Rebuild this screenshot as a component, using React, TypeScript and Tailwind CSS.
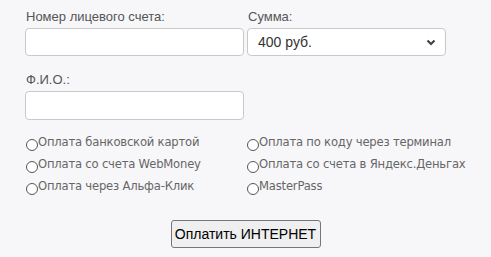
import React from "react"

const methods = [
    "Оплата банковской картой",
    "Оплата по коду через терминал",
    "Оплата со счета WebMoney",
    "Оплата со счета в Яндекс.Деньгах",
    "Оплата через Альфа-Клик",
    "MasterPass",
]

export default function App() {
    return (
        <div className="min-h-screen w-full bg-[#f7f7f9] pt-[9px] font-['Liberation_Sans',Arial,sans-serif]">
            <div className="pl-[25px]">
                <div className="grid grid-cols-[219px_199px] gap-x-[3px]">
                    <div className="flex flex-col">
                        <label className="pl-[1px] text-[13px] leading-[16px] text-[#555]">Номер лицевого счета:</label>
                        <input className="mt-[3px] h-[28px] rounded-[4px] border border-[#c9c9c9] bg-white" />
                    </div>
                    <div className="flex flex-col">
                        <label className="pl-[1px] text-[13px] leading-[16px] text-[#555]">Сумма:</label>
                        <div className="mt-[3px] flex h-[28px] items-center justify-between rounded-[4px] border border-[#c9c9c9] bg-white pl-[10px] pr-[9px]">
                            <span className="text-[14px] text-[#333]">400 руб.</span>
                            <svg width="10" height="7" viewBox="0 0 10 7">
                                <path d="M1.5 1.5 L5 5 L8.5 1.5" fill="none" stroke="#444" strokeWidth="2.2" />
                            </svg>
                        </div>
                    </div>
                </div>

                <div className="mt-[16px] flex w-[219px] flex-col">
                    <label className="pl-[1px] text-[13px] leading-[16px] text-[#555]">Ф.И.О.:</label>
                    <input className="mt-[3px] h-[29px] rounded-[4px] border border-[#c9c9c9] bg-white" />
                </div>

                <div className="mt-[14px] grid grid-cols-[221px_220px] gap-y-[6px] pl-[1px]">
                    {methods.map((m) => (
                        <label key={m} className="flex h-[16px] items-end whitespace-nowrap font-['DejaVu_Sans',Verdana,sans-serif] text-[11.6px] leading-[16px] text-[#666]">
                            <span className="mb-[-1px] h-[12px] w-[12px] shrink-0 rounded-full border border-[#555] bg-white" />
                            <span className="tracking-[-0.2px]">{m}</span>
                        </label>
                    ))}
                </div>
            </div>

            <div className="mt-[26px] flex justify-center">
                <button className="h-[28px] w-[150px] rounded-[3px] border border-[#767676] bg-[#efefef] text-[14px] text-black">
                    Оплатить ИНТЕРНЕТ
                </button>
            </div>
        </div>
    )
}
